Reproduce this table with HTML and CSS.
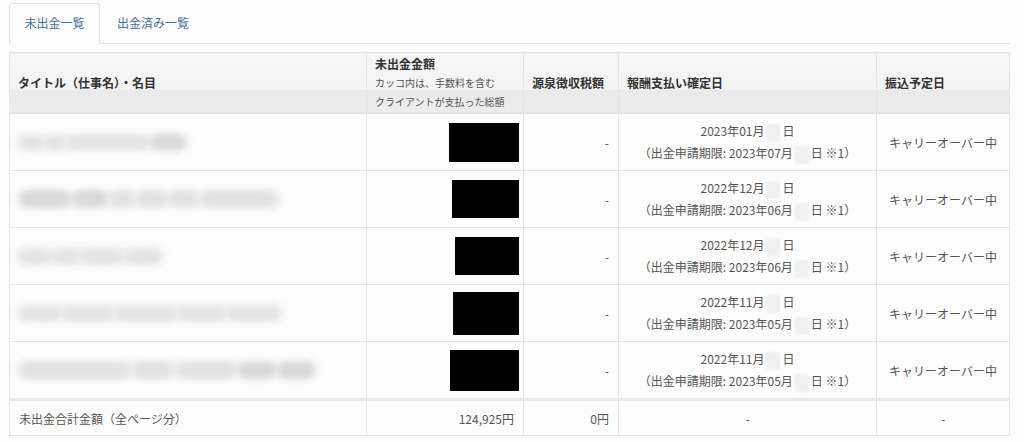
FILE: index.html
```html
<!DOCTYPE html>
<html lang="ja">
<head>
<meta charset="utf-8">
<title>未出金一覧</title>
<link rel="stylesheet" href="styles.css">
</head>
<body>
<div class="page">
  <ul class="tabs">
    <li class="tab active">未出金一覧</li>
    <li class="tab">出金済み一覧</li>
  </ul>
  <table class="list">
    <colgroup>
      <col class="c1"><col class="c2"><col class="c3"><col class="c4"><col class="c5">
    </colgroup>
    <thead>
      <tr>
        <th>タイトル（仕事名）・名目</th>
        <th><span class="hmain">未出金金額</span><span class="hsub">カッコ内は、手数料を含む<br>クライアントが支払った総額</span></th>
        <th>源泉徴収税額</th>
        <th>報酬支払い確定日</th>
        <th>振込予定日</th>
      </tr>
    </thead>
    <tbody>
      <tr>
        <td><div class="blur"><i style="width:22px"></i><i style="width:20px"></i><i style="width:80px"></i><i class="dk" style="width:34px"></i></div></td>
        <td class="r"><span class="mask" style="width:70px;height:39px"></span></td>
        <td class="r">-</td>
        <td class="c">2023年01月<span class="hide"></span>日<br>（出金申請期限: 2023年07月<span class="hide"></span>日 ※1）</td>
        <td class="c">キャリーオーバー中</td>
      </tr>
      <tr>
        <td><div class="blur wide"><i class="dk" style="width:50px"></i><i class="dk" style="width:34px"></i><i style="width:24px"></i><i style="width:30px"></i><i style="width:28px"></i><i style="width:76px"></i></div></td>
        <td class="r"><span class="mask" style="width:67px;height:38px"></span></td>
        <td class="r">-</td>
        <td class="c">2022年12月<span class="hide"></span>日<br>（出金申請期限: 2023年06月<span class="hide"></span>日 ※1）</td>
        <td class="c">キャリーオーバー中</td>
      </tr>
      <tr>
        <td><div class="blur"><i style="width:30px"></i><i style="width:26px"></i><i style="width:40px"></i><i style="width:36px"></i></div></td>
        <td class="r"><span class="mask" style="width:64px;height:38px"></span></td>
        <td class="r">-</td>
        <td class="c">2022年12月<span class="hide"></span>日<br>（出金申請期限: 2023年06月<span class="hide"></span>日 ※1）</td>
        <td class="c">キャリーオーバー中</td>
      </tr>
      <tr>
        <td><div class="blur"><i style="width:40px"></i><i style="width:50px"></i><i style="width:60px"></i><i style="width:46px"></i><i style="width:52px"></i></div></td>
        <td class="r"><span class="mask" style="width:66px;height:43px"></span></td>
        <td class="r">-</td>
        <td class="c">2022年11月<span class="hide"></span>日<br>（出金申請期限: 2023年05月<span class="hide"></span>日 ※1）</td>
        <td class="c">キャリーオーバー中</td>
      </tr>
      <tr>
        <td><div class="blur wide"><i style="width:110px"></i><i style="width:40px"></i><i style="width:60px"></i><i class="dk" style="width:36px"></i><i class="dk" style="width:36px"></i></div></td>
        <td class="r"><span class="mask" style="width:69px;height:41px"></span></td>
        <td class="r">-</td>
        <td class="c">2022年11月<span class="hide"></span>日<br>（出金申請期限: 2023年05月<span class="hide"></span>日 ※1）</td>
        <td class="c">キャリーオーバー中</td>
      </tr>
    </tbody>
    <tfoot>
      <tr>
        <td>未出金合計金額（全ページ分）</td>
        <td class="r">124,925円</td>
        <td class="r">0円</td>
        <td class="c">-</td>
        <td class="c">-</td>
      </tr>
    </tfoot>
  </table>
</div>
</body>
</html>
```
FILE: styles.css
```css
html, body {
  margin: 0;
  padding: 0;
  background: #fdfdfd;
}
body {
  font-family: "Noto Sans CJK JP", "Noto Sans", sans-serif;
  font-size: 12px;
  color: #555;
}
.page {
  padding: 3px 14px 0 9px;
}
.tabs {
  list-style: none;
  margin: 0;
  padding: 0;
  display: flex;
  border-bottom: 1px solid #e2e2e2;
  height: 40px;
}
.tab {
  height: 40px;
  box-sizing: border-box;
  padding: 0 16px;
  line-height: 38px;
  color: #3d6e9d;
  border: 1px solid transparent;
  border-bottom: none;
  border-radius: 3px 3px 0 0;
}
.tab.active {
  width: 91px;
  text-align: center;
  padding: 0;
  background: #fdfdfd;
  border-color: #e2e2e2;
  height: 41px;
}
.list {
  margin-top: 8px;
  width: 1000px;
  border-collapse: collapse;
  table-layout: fixed;
  border: 1px solid #e4e4e4;
}
.c1 { width: 357px; }
.c2 { width: 157px; }
.c3 { width: 95px; }
.c4 { width: 258px; }
.c5 { width: 133px; }
th {
  height: 59px;
  padding: 0 8px;
  text-align: left;
  vertical-align: middle;
  font-weight: bold;
  color: #333;
  border: 1px solid #e4e4e4;
  border-bottom: 2px solid #e4e4e4;
  background: linear-gradient(to bottom, #f7f7f7 0%, #f3f3f3 60%, #ebebeb 62%, #ececec 100%);
}
.hmain {
  display: block;
  line-height: 19px;
}
.hsub {
  display: block;
  font-weight: normal;
  font-size: 10px;
  line-height: 19px;
  color: #555;
}
td {
  height: 56px;
  padding: 0 9px;
  border: 1px solid #e4e4e4;
  line-height: 21px;
  vertical-align: middle;
  background: #fdfdfd;
}
td.r { text-align: right; }
td.c { text-align: center; }
tfoot td {
  height: 34px;
  border-top: 3px solid #e9e9e9;
}
.blur {
  display: inline-flex;
  align-items: center;
  gap: 3px;
  margin-left: -3px;
  padding: 0 4px;
  height: 24px;
  position: relative;
}
.blur::before {
  content: "";
  position: absolute;
  inset: 3px 0;
  border-radius: 12px;
  background: #efefef;
  filter: blur(4px);
}
.blur i {
  position: relative;
  display: block;
  height: 13px;
  border-radius: 8px;
  background: #e3e3e3;
  filter: blur(3px);
}
.blur i.dk {
  background: #d9d9d9;
  height: 15px;
}
.blur.wide i {
  height: 16px;
}
.mask {
  display: inline-block;
  vertical-align: middle;
  background: #000;
  margin-right: -5px;
}
.hide {
  display: inline-block;
  width: 14px;
  height: 18px;
  margin: 0 2px;
  vertical-align: middle;
  background: #f0f0f0;
  border-radius: 3px;
  filter: blur(1px);
}
```
